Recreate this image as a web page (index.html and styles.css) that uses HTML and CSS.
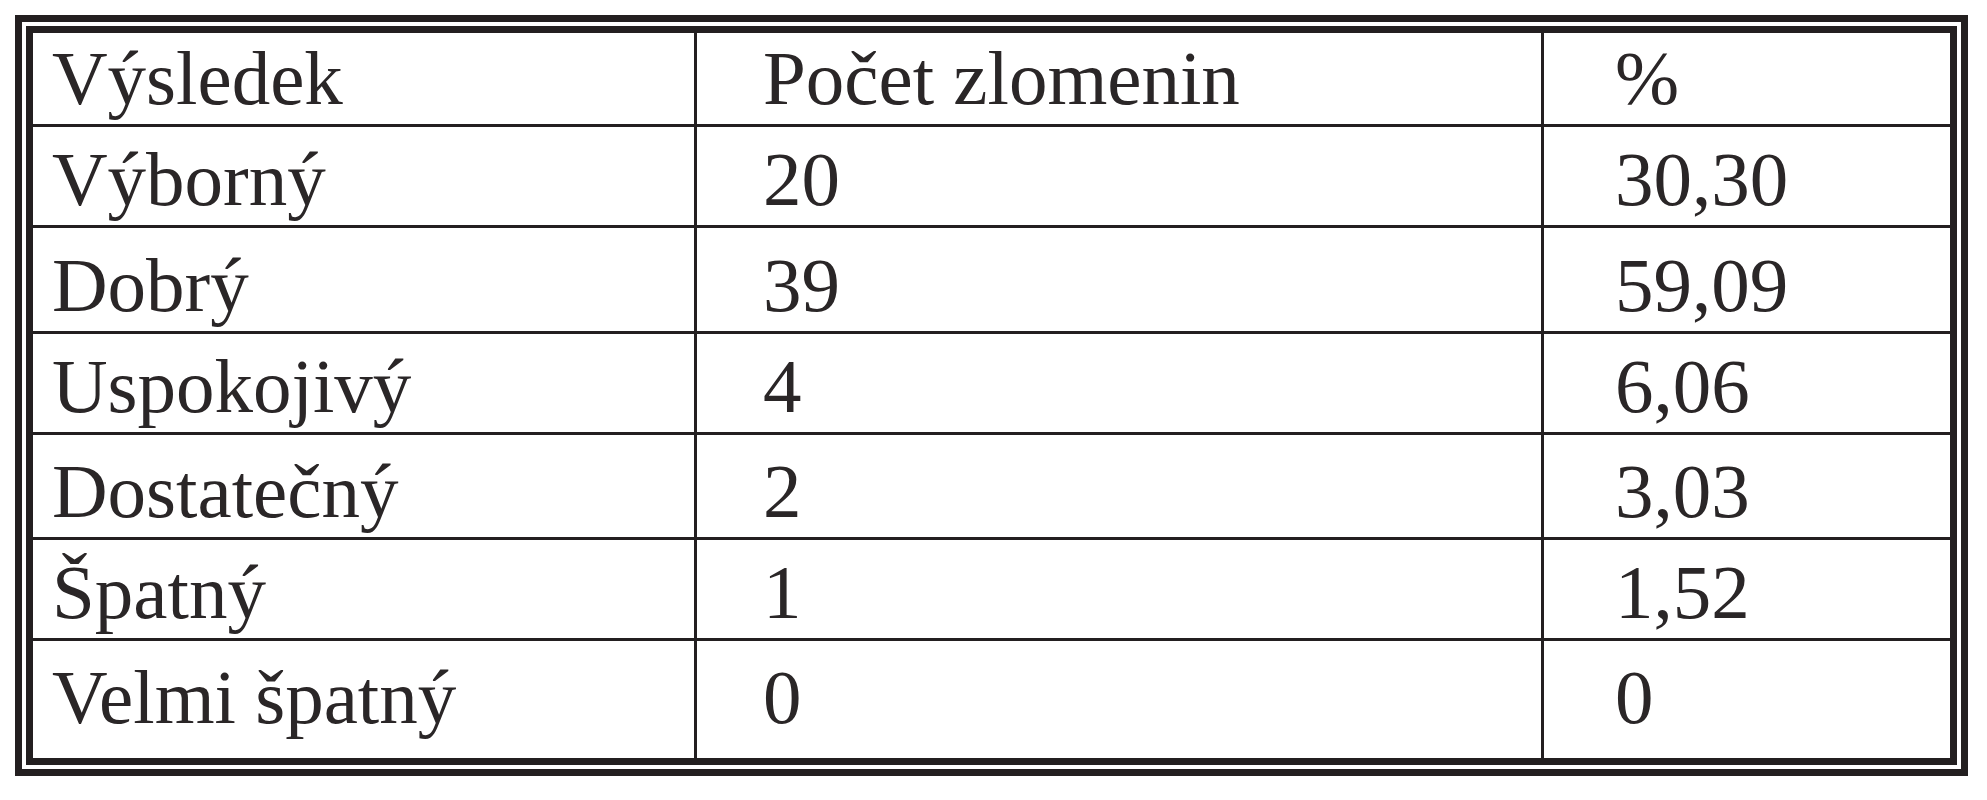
FILE: index.html
```html
<!DOCTYPE html>
<html lang="cs">
<head>
<meta charset="utf-8">
<title>Výsledek</title>
<link rel="stylesheet" href="styles.css">
</head>
<body>
<div class="frame">
  <div class="inner">
    <div class="grid" role="table">
      <div class="cell c1">Výsledek</div>
      <div class="cell c2">Počet zlomenin</div>
      <div class="cell c3">%</div>

      <div class="cell c1">Výborný</div>
      <div class="cell c2">20</div>
      <div class="cell c3">30,30</div>

      <div class="cell c1">Dobrý</div>
      <div class="cell c2">39</div>
      <div class="cell c3">59,09</div>

      <div class="cell c1">Uspokojivý</div>
      <div class="cell c2">4</div>
      <div class="cell c3">6,06</div>

      <div class="cell c1">Dostatečný</div>
      <div class="cell c2">2</div>
      <div class="cell c3">3,03</div>

      <div class="cell c1">Špatný</div>
      <div class="cell c2">1</div>
      <div class="cell c3">1,52</div>

      <div class="cell c1 last">Velmi špatný</div>
      <div class="cell c2 last">0</div>
      <div class="cell c3 last">0</div>
    </div>
  </div>
</div>
</body>
</html>
```

FILE: styles.css
```css
html, body {
  margin: 0;
  padding: 0;
  background: #ffffff;
}

body {
  padding: 15px 0 0 15px;
  font-family: "Liberation Serif", "Times New Roman", serif;
  color: #2a2627;
}

.frame {
  width: 1953px;
  box-sizing: border-box;
  border: 7px solid #231f20;
  padding: 4px;
  background: #ffffff;
}

.inner {
  border: 7px solid #231f20;
  background: #231f20;
}

.grid {
  display: grid;
  grid-template-columns: 661px 844px 406px;
  grid-template-rows: 91px 98px 103px 98px 102px 98px 117px;
  column-gap: 3px;
  row-gap: 3px;
  background: #231f20;
}

.cell {
  background: #ffffff;
  display: flex;
  align-items: flex-end;
  font-size: 77px;
  line-height: 1;
  padding-bottom: 7px;
  box-sizing: border-box;
  white-space: nowrap;
}

.c1 { padding-left: 19px; }
.c2 { padding-left: 66px; }
.c3 { padding-left: 71px; }

.cell.last { padding-bottom: 22px; }
```
